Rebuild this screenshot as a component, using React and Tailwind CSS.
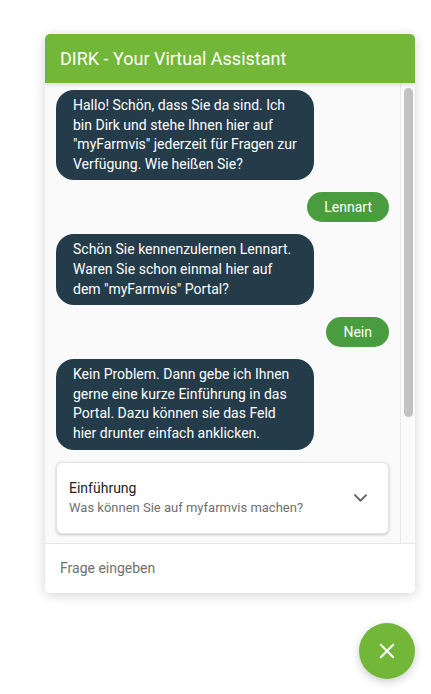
import React from "react";

const Bot = ({ children }) => (
  <div className="self-start w-[258px] rounded-[18px] bg-[#243b4a] text-white text-[14px] leading-[19.6px] px-[17px] py-[6px]">
    {children}
  </div>
);

const User = ({ children }) => (
  <div className="self-end rounded-full bg-[#4a9d3e] text-white text-[14px] leading-[30px] h-[30px] px-[17px]">
    {children}
  </div>
);

export default function App() {
  return (
    <div className="min-h-[694px] bg-white pt-[34px] pl-[45px]" style={{ fontFamily: "Roboto, 'Liberation Sans', sans-serif" }}>
      <div className="w-[370px] flex flex-col">
        <div className="h-[559px] flex flex-col rounded-[5px] bg-white shadow-[0_2px_12px_rgba(0,0,0,0.18)] overflow-hidden">
          <div className="h-[49px] shrink-0 bg-[#72b737] flex items-center px-[15px] text-white text-[18px] shadow-[0_2px_4px_rgba(0,0,0,0.12)] z-10">
            DIRK - Your Virtual Assistant
          </div>
          <div className="flex-1 flex bg-[#fafafa] min-h-0">
            <div className="flex-1 overflow-hidden flex flex-col gap-3 pt-[7px] pl-[11px] pr-[11px]">
              <Bot>
                Hallo! Schön, dass Sie da sind. Ich bin Dirk und stehe Ihnen hier auf "myFarmvis" jederzeit für Fragen zur Verfügung. Wie heißen Sie?
              </Bot>
              <User>Lennart</User>
              <Bot>
                Schön Sie kennenzulernen Lennart. Waren Sie schon einmal hier auf dem "myFarmvis" Portal?
              </Bot>
              <User>Nein</User>
              <Bot>
                Kein Problem. Dann gebe ich Ihnen gerne eine kurze Einführung in das Portal. Dazu können sie das Feld hier drunter einfach anklicken.
              </Bot>
              <div className="shrink-0 h-[72px] rounded-[6px] bg-white border border-[#e4e4e4] shadow-[0_1px_3px_rgba(0,0,0,0.22)] flex items-center pl-[12px] pr-[18px]">
                <div className="flex-1 flex flex-col">
                  <span className="text-[14px] leading-[20px] text-[#222]">Einführung</span>
                  <span className="text-[13px] leading-[20px] text-[#707070]">Was können Sie auf myfarmvis machen?</span>
                </div>
                <svg width="19" height="19" viewBox="0 0 24 24" fill="none" stroke="#6b6b6b" strokeWidth="2.6" strokeLinecap="round" strokeLinejoin="round">
                  <path d="M5 9l7 7 7-7" />
                </svg>
              </div>
              <div className="shrink-0 h-[40px]" />
            </div>
            <div className="w-[15px] shrink-0 border-l border-[#e8e8e8] bg-[#fafafa] pt-[5px] flex justify-center">
              <div className="w-[9px] h-[329px] rounded-full bg-[#c2c2c2]" />
            </div>
          </div>
          <div className="h-[50px] shrink-0 border-t border-[#e6e6e6] bg-white flex items-center px-[15px] text-[14px] text-[#707070]">
            Frage eingeben
          </div>
        </div>
        <div className="self-end mt-[30px] w-[56px] h-[56px] rounded-full bg-[#72b737] shadow-[0_3px_10px_rgba(0,0,0,0.2)] flex items-center justify-center">
          <svg width="16" height="16" viewBox="0 0 16 16" fill="none" stroke="white" strokeWidth="2" strokeLinecap="square">
            <path d="M2 2l12 12M14 2L2 14" />
          </svg>
        </div>
      </div>
    </div>
  );
}
